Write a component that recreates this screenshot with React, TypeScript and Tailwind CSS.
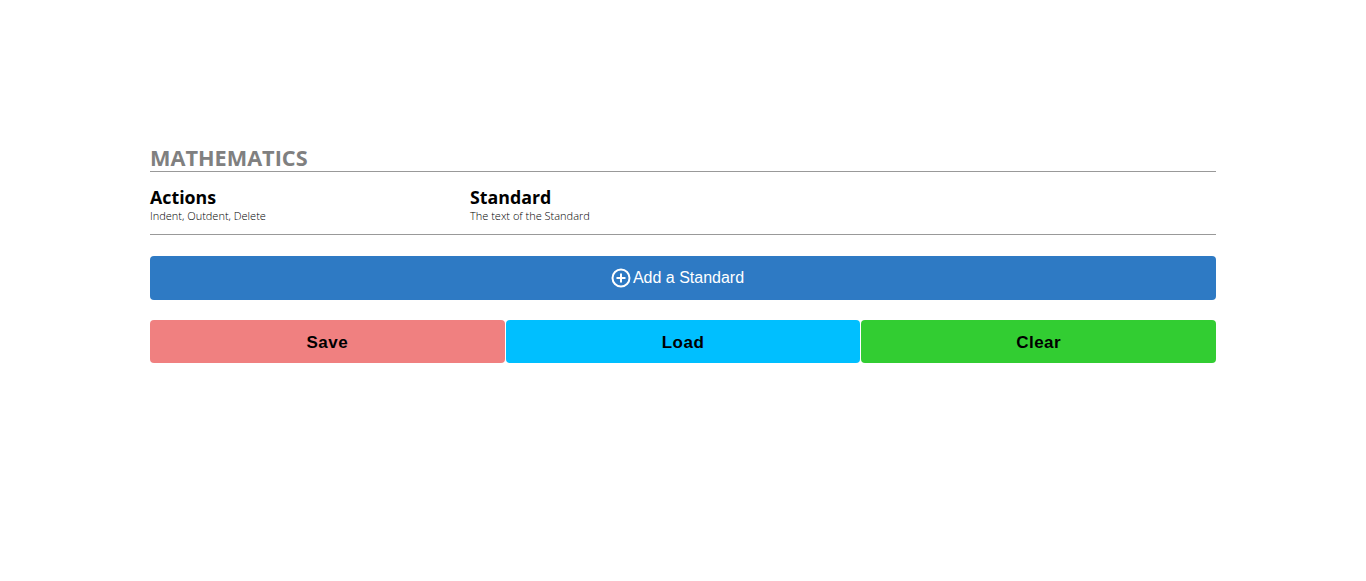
import React from 'react'

const PlusCircle = () => (
    <svg width="20" height="20" viewBox="0 0 20 20" fill="none" stroke="white" strokeWidth="2">
        <circle cx="10" cy="10" r="8.5" />
        <path d="M10 5.5v9M5.5 10h9" />
    </svg>
)

const App = () => {
    return (
        <div className="w-full min-h-[581px] bg-white">
            <div className="w-[1066px] mx-auto pt-[144px]">
                <h2 className="text-[21.7px] font-bold text-[#808080] leading-[27px] uppercase" style={{ fontFamily: '"Open Sans", sans-serif' }}>
                    Mathematics
                </h2>
                <div className="border-t border-[#999]" />
                <div className="flex pt-[13px] pb-[11px]" style={{ fontFamily: '"Open Sans", sans-serif' }}>
                    <div className="w-[320px]">
                        <div className="text-[17.8px] font-bold text-black leading-[24px]">Actions</div>
                        <div className="text-[11px] font-light text-black leading-[14px]">Indent, Outdent, Delete</div>
                    </div>
                    <div className="flex-1">
                        <div className="text-[17.8px] font-bold text-black leading-[24px]">Standard</div>
                        <div className="text-[11px] font-light text-black leading-[14px]">The text of the Standard</div>
                    </div>
                </div>
                <div className="border-t border-[#999]" />
                <button
                    className="mt-[21px] w-full h-[44px] bg-[#2e7ac4] rounded-[4px] text-white text-[16px] flex items-center justify-center gap-[2px] pr-[11px]"
                    style={{ fontFamily: '"Liberation Sans", Arial, sans-serif' }}>
                    <PlusCircle />
                    Add a Standard
                </button>
                <div className="mt-[20px] flex gap-[1px]" style={{ fontFamily: '"Liberation Sans", Arial, sans-serif' }}>
                    <button className="flex-1 h-[43px] pt-[2px] bg-[#f08080] rounded-[4px] text-black font-bold text-[17px] tracking-[0.5px]">Save</button>
                    <button className="flex-1 h-[43px] pt-[2px] bg-[#00bfff] rounded-[4px] text-black font-bold text-[17px] tracking-[0.5px]">Load</button>
                    <button className="flex-1 h-[43px] pt-[2px] bg-[#32cd32] rounded-[4px] text-black font-bold text-[17px] tracking-[0.5px]">Clear</button>
                </div>
            </div>
        </div>
    )
}

export default App
